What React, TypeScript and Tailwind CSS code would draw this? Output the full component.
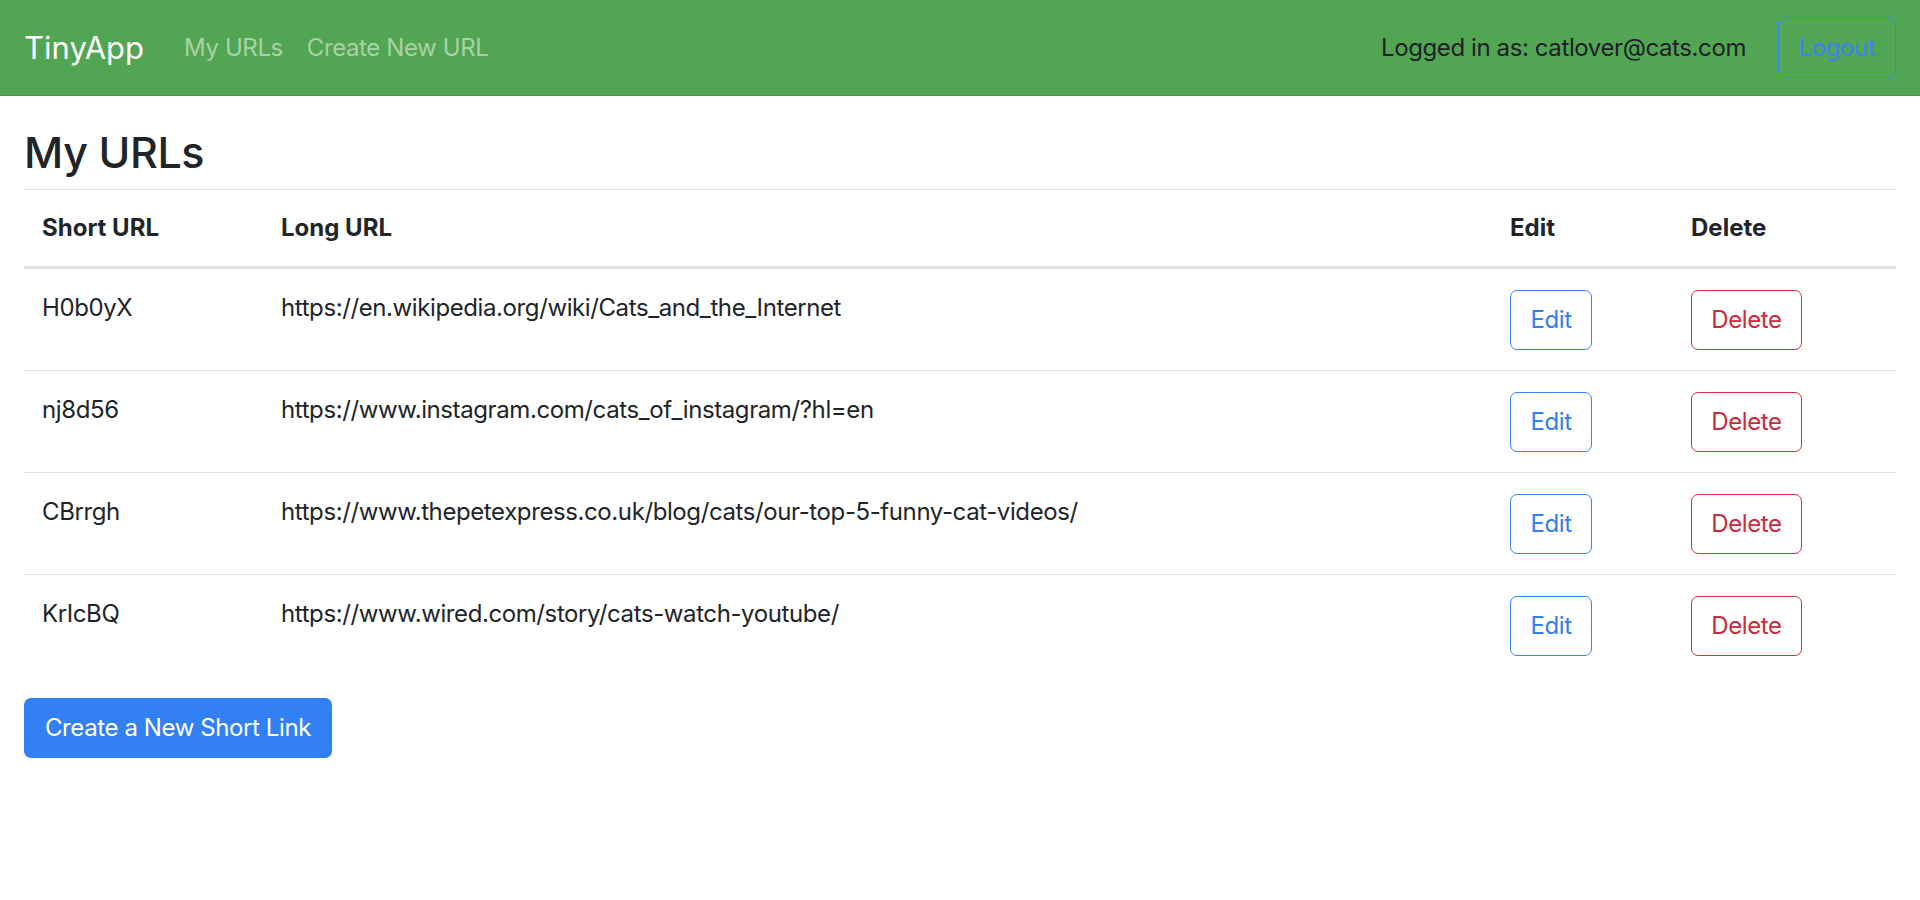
const rows = [
  { id: "H0b0yX", url: "https://en.wikipedia.org/wiki/Cats_and_the_Internet" },
  { id: "nj8d56", url: "https://www.instagram.com/cats_of_instagram/?hl=en" },
  { id: "CBrrgh", url: "https://www.thepetexpress.co.uk/blog/cats/our-top-5-funny-cat-videos/" },
  { id: "KrIcBQ", url: "https://www.wired.com/story/cats-watch-youtube/" },
];

function Navbar() {
  return (
    <nav className="flex h-[96px] items-center justify-between border-b border-[#3f9a3f] bg-[#52a552] px-6">
      <div className="flex items-center">
        <a className="mr-[28px] text-[31px] leading-[44px] text-white" href="#">
          TinyApp
        </a>
        <a className="px-3 text-[24px] tracking-[-0.4px] text-[#a9d2a9]" href="#">
          My URLs
        </a>
        <a className="px-3 text-[24px] tracking-[-0.4px] text-[#a9d2a9]" href="#">
          Create New URL
        </a>
      </div>
      <div className="flex items-center gap-8">
        <span className="text-[24px] tracking-[-0.4px] text-[#1f1f2a]">Logged in as: catlover@cats.com</span>
        <button className="flex h-[61px] w-[118px] items-center justify-center rounded-[7px] border-[1.5px] border-[#3a83f2] text-[24px] tracking-[-0.4px] text-[#3a83f2]">
          Logout
        </button>
      </div>
    </nav>
  );
}

export default function App() {
  return (
    <div className="min-h-screen bg-white font-['Inter','Liberation_Sans',sans-serif] text-[#212529]">
      <Navbar />
      <main className="px-6 pt-[29px]">
        <h2 className="mb-[10px] text-[43px] leading-[54px] font-medium tracking-[-0.4px]">My URLs</h2>
        <table className="w-full border-collapse text-left text-[24px] leading-[36px] tracking-[-0.4px]">
          <colgroup>
            <col className="w-[239px]" />
            <col />
            <col className="w-[181px]" />
            <col className="w-[223px]" />
          </colgroup>
          <thead>
            <tr className="border-t border-b-[3px] border-t-[#dee2e6] border-b-[#dee2e6]">
              <th className="px-[18px] py-[20px] font-bold tracking-normal">Short URL</th>
              <th className="px-[18px] py-[20px] font-bold tracking-normal">Long URL</th>
              <th className="px-[18px] py-[20px] font-bold tracking-normal">Edit</th>
              <th className="px-[18px] py-[20px] font-bold tracking-normal">Delete</th>
            </tr>
          </thead>
          <tbody>
            {rows.map((r, i) => (
              <tr key={r.id} className={i < rows.length - 1 ? "border-b border-[#dee2e6]" : ""}>
                <td className="px-[18px] pt-[21px] pb-[20px] align-top">{r.id}</td>
                <td className="px-[18px] pt-[21px] pb-[20px] align-top">{r.url}</td>
                <td className="px-[18px] pt-[21px] pb-[20px] align-top">
                  <button className="h-[60px] w-[82px] rounded-[7px] border-[1.5px] border-[#3a83f2] text-[24px] text-[#2f7ff0]">
                    Edit
                  </button>
                </td>
                <td className="px-[18px] pt-[21px] pb-[20px] align-top">
                  <button className="h-[60px] w-[111px] rounded-[7px] border-[1.5px] border-[#d03040] text-[24px] text-[#cc2a3a]">
                    Delete
                  </button>
                </td>
              </tr>
            ))}
          </tbody>
        </table>
        <button className="mt-[22px] h-[60px] w-[308px] rounded-[7px] bg-[#3380f5] text-[24px] tracking-[-0.4px] text-white">
          Create a New Short Link
        </button>
      </main>
    </div>
  );
}
